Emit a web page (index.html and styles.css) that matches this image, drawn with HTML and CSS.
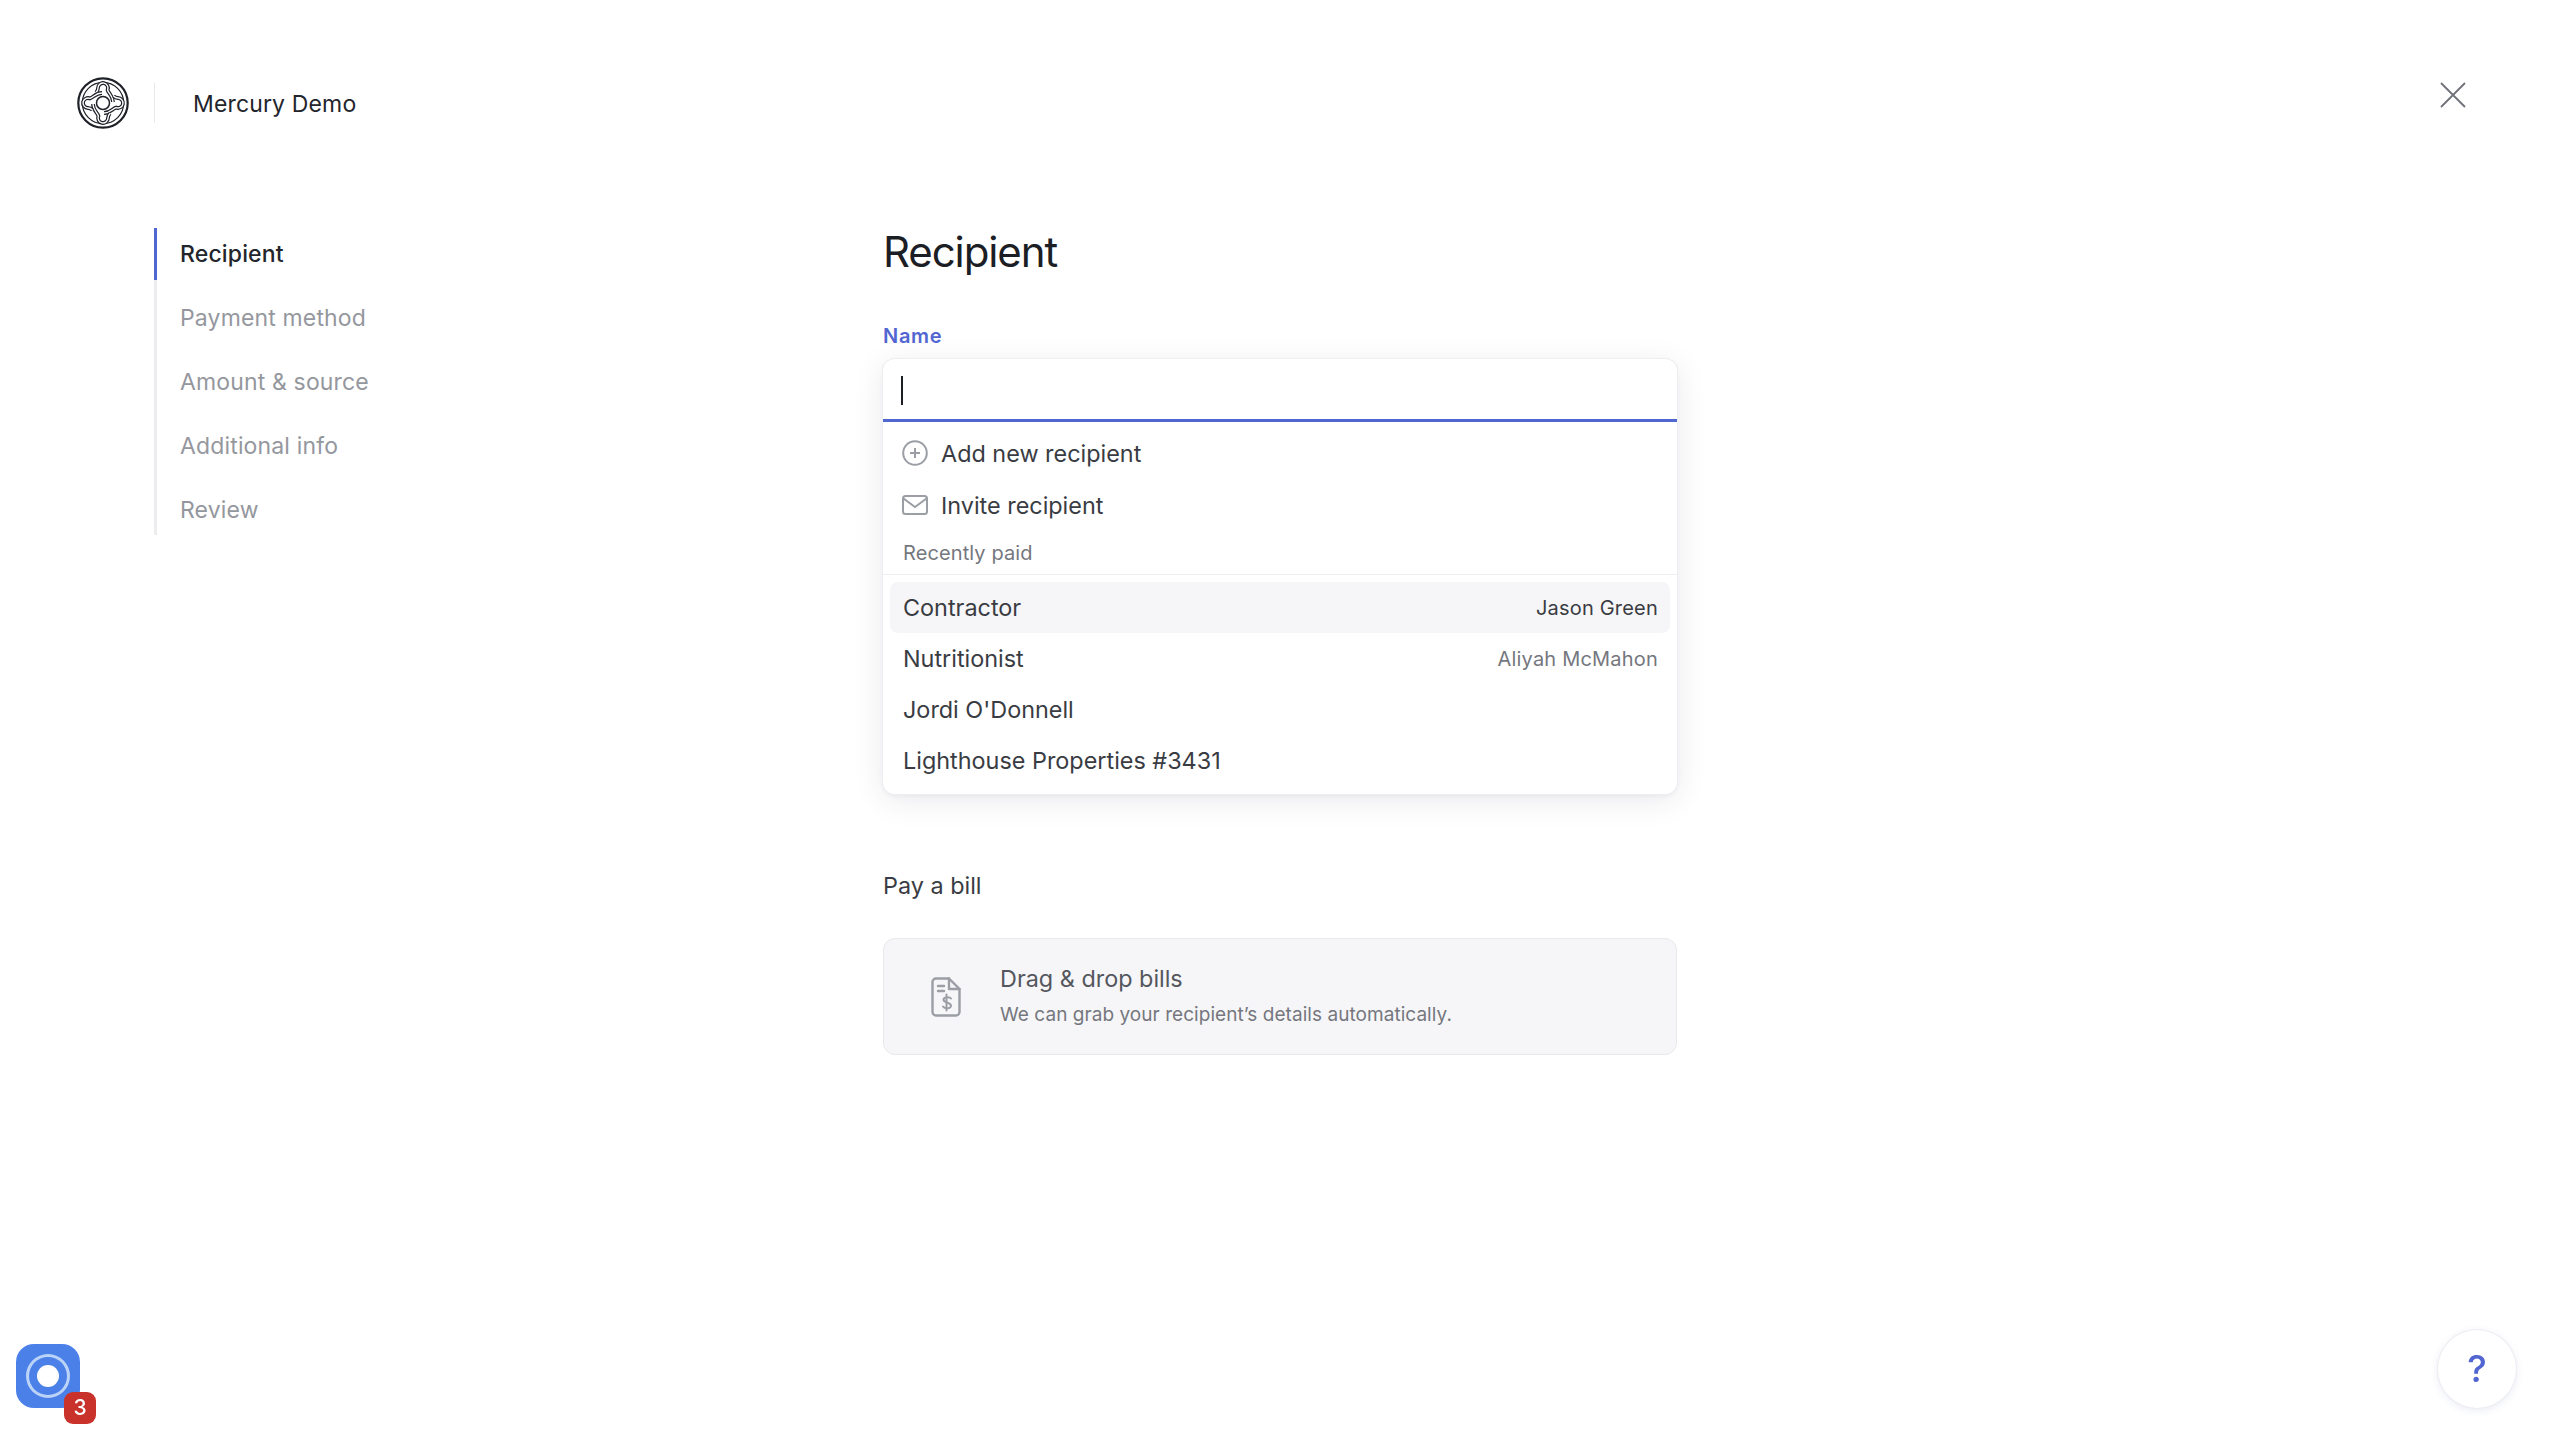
FILE: index.html
```html
<!DOCTYPE html>
<html lang="en">
<head>
    <meta charset="UTF-8">
    <title>Send money - Recipient</title>
    <link rel="stylesheet" href="styles.css">
</head>
<body>
    <header class="top-bar">
        <svg class="logo" viewBox="-26 -26 52 52" fill="none" stroke="#1f2128">
            <defs>
                <path id="band" d="M-7 -10.500C-5.500 -12 -5 -13.500 -5 -15A5 5 0 1 1 4.600 -13C5.500 -9.500 10 -7.500 10 -1"/>
                <g id="arm">
                    <use href="#band" stroke="#1f2128" stroke-width="3.800"/>
                    <use href="#band" stroke="#fff" stroke-width="1.400"/>
                </g>
            </defs>
            <circle r="24.700" stroke-width="2.200"/>
            <circle r="20.700" stroke-width="1.200"/>
            <use href="#arm"/>
            <use href="#arm" transform="rotate(90)"/>
            <use href="#arm" transform="rotate(180)"/>
            <use href="#arm" transform="rotate(270)"/>
            <circle r="6.500" stroke-width="1.500" fill="#fff"/>
        </svg>
        <span class="divider"></span>
        <span class="org-name">Mercury Demo</span>
        <svg class="close-icon" viewBox="0 0 26 26" fill="none" stroke="#6f7178" stroke-width="1.800">
            <path d="M1 1l24 24M25 1L1 25"/>
        </svg>
    </header>

    <div class="layout">
        <nav class="steps">
            <a class="step active">Recipient</a>
            <a class="step">Payment method</a>
            <a class="step">Amount &amp; source</a>
            <a class="step">Additional info</a>
            <a class="step">Review</a>
        </nav>

        <main class="form-col">
            <h1>Recipient</h1>
            <label class="field-label">Name</label>

            <div class="combo">
                <div class="combo-input"><span class="caret"></span></div>
                <div class="combo-menu">
                    <div class="action-row">
                        <svg class="action-icon" viewBox="0 0 26 26" fill="none" stroke="#9c9ea6" stroke-width="2">
                            <circle cx="13" cy="13" r="11.800"/>
                            <path d="M13 8v10M8 13h10"/>
                        </svg>
                        Add new recipient
                    </div>
                    <div class="action-row">
                        <svg class="action-icon" viewBox="0 0 26 20" fill="none" stroke="#9c9ea6" stroke-width="2">
                            <rect x="1" y="1" width="24" height="18" rx="2.500"/>
                            <path d="M1.500 3.500L13 12l11.500-8.500"/>
                        </svg>
                        Invite recipient
                    </div>
                    <div class="menu-heading">Recently paid</div>
                    <ul class="recent-list">
                        <li class="recent-row hover"><span>Contractor</span><span class="person">Jason Green</span></li>
                        <li class="recent-row"><span>Nutritionist</span><span class="person muted">Aliyah McMahon</span></li>
                        <li class="recent-row"><span>Jordi O'Donnell</span></li>
                        <li class="recent-row"><span>Lighthouse Properties #3431</span></li>
                    </ul>
                </div>
            </div>

            <div class="bill-title">Pay a bill</div>
            <div class="drop-card">
                <svg class="bill-icon" viewBox="0 0 30 40" fill="none" stroke="#9c9ea6" stroke-width="2.400" stroke-linejoin="round" stroke-linecap="round">
                    <path d="M18 1.500H5a3.500 3.500 0 0 0-3.500 3.500v30A3.500 3.500 0 0 0 5 38.500h20a3.500 3.500 0 0 0 3.500-3.500V12z"/>
                    <path d="M18 1.500V12h10.500M7 9h6M7 14h6"/>
                    <path d="M20 21.500c-1-1.500-6.500-2-7.500 .8-1.200 3.700 8 2.700 7.500 6.700-.4 3-6.500 2.800-8 .5M15.500 17.500v16" stroke-width="2"/>
                </svg>
                <div class="drop-text">
                    <div class="drop-title">Drag &amp; drop bills</div>
                    <div class="drop-sub">We can grab your recipient’s details automatically.</div>
                </div>
            </div>
        </main>
    </div>

    <div class="launcher">
        <span class="launcher-dot"></span>
        <span class="badge">3</span>
    </div>
    <div class="help-btn">?</div>
</body>
</html>
```

FILE: styles.css
```css
* {
    box-sizing: border-box;
}
html, body {
    height: 100%;
}
body {
    margin: 0;
    background: #fff;
    color: #2d2f36;
    font-family: Inter, "Noto Sans", sans-serif;
    overflow: hidden;
}
.top-bar {
    display: flex;
    align-items: center;
    height: 205px;
    padding: 0 0 0 77px;
    margin-bottom: -205px;
}
.logo {
    width: 52px;
    height: 52px;
}
.divider {
    width: 1px;
    height: 40px;
    margin-left: 25px;
    background: #e9e9ec;
}
.org-name {
    margin-left: 38px;
    padding-top: 2px;
    font-size: 23px;
    letter-spacing: 0.15px;
    color: #23252c;
}
.close-icon {
    width: 26px;
    height: 26px;
    margin-left: auto;
    margin-right: 94px;
    margin-top: -16px;
}
.layout {
    display: flex;
    padding-top: 228px;
}
.steps {
    width: 729px;
    height: 307px;
    margin-left: 154px;
    border-left: 3px solid #ededf0;
    display: flex;
    flex-direction: column;
}
.step {
    flex: none;
    height: 64px;
    margin-left: -3px;
    padding-left: 23px;
    font-size: 23px;
    line-height: 52px;
    letter-spacing: 0.15px;
    color: #95979e;
    border-left: 3px solid transparent;
}
.step.active {
    height: 52px;
    margin-bottom: 12px;
    color: #23252c;
    font-weight: 500;
    border-left-color: #5266d1;
}
.form-col {
    width: 794px;
}
h1 {
    margin: -2px 0 0;
    font-size: 42px;
    font-weight: 400;
    line-height: 52px;
    letter-spacing: -1.1px;
    color: #1c1e25;
}
.field-label {
    display: block;
    margin-top: 46px;
    font-size: 20px;
    font-weight: 600;
    line-height: 24px;
    letter-spacing: 0.7px;
    color: #5266d1;
}
.combo {
    margin-top: 11px;
    height: 435px;
    border-radius: 12px;
    background: #fff;
    box-shadow: 0 0 0 1px #eeeef1, 0 6px 30px rgba(40, 44, 80, 0.10), 0 2px 4px rgba(40, 44, 80, 0.06);
}
.combo-input {
    height: 63px;
    padding: 17px 0 0 18px;
    border-bottom: 3px solid #5266d1;
}
.caret {
    display: block;
    width: 2px;
    height: 29px;
    background: #1c1e25;
}
.combo-menu {
    padding-top: 5px;
}
.action-row {
    display: flex;
    align-items: center;
    height: 52px;
    padding-left: 19px;
    font-size: 23.400px;
    color: #3a3c43;
}
.action-icon {
    width: 26px;
    height: 26px;
    margin-right: 13px;
}
.menu-heading {
    height: 44px;
    padding: 8px 0 0 20px;
    font-size: 20px;
    line-height: 28px;
    letter-spacing: 0.1px;
    color: #75777e;
    border-bottom: 1px solid #eeeef1;
}
.recent-list {
    list-style: none;
    margin: 0;
    padding: 7px 7px 0;
}
.recent-row {
    display: flex;
    align-items: center;
    justify-content: space-between;
    height: 51px;
    padding: 0 12px 0 13px;
    border-radius: 8px;
    font-size: 23.400px;
    color: #3a3c43;
}
.recent-row.hover {
    background: #f6f6f8;
}
.person {
    font-size: 20px;
    letter-spacing: 0.2px;
    color: #3a3c43;
}
.person.muted {
    color: #75777e;
}
.bill-title {
    margin-top: 74px;
    font-size: 23.400px;
    line-height: 36px;
    color: #3a3c43;
}
.drop-card {
    display: flex;
    align-items: center;
    height: 117px;
    margin-top: 34px;
    padding-left: 47px;
    border: 1px solid #e9e9ec;
    border-radius: 12px;
    background: #f6f6f8;
}
.bill-icon {
    width: 30px;
    height: 40px;
    margin-right: 39px;
}
.drop-text {
    padding-bottom: 3px;
}
.drop-title {
    font-size: 23.400px;
    line-height: 32px;
    color: #55575e;
}
.drop-sub {
    margin-top: 8px;
    font-size: 19px;
    line-height: 24px;
    letter-spacing: 0.05px;
    color: #75777e;
}
.launcher {
    position: fixed;
    left: 16px;
    top: 1344px;
    width: 64px;
    height: 64px;
    border-radius: 18px;
    background: #4a80e8;
    display: flex;
    align-items: center;
    justify-content: center;
}
.launcher-dot {
    width: 22px;
    height: 22px;
    border-radius: 50%;
    background: #fff;
    box-shadow: 0 0 0 8px #4a80e8, 0 0 0 11px #bcd3f8;
}
.badge {
    position: absolute;
    left: 48px;
    top: 48px;
    width: 32px;
    height: 32px;
    border-radius: 9px;
    background: #c8322b;
    color: #fff;
    font-size: 21px;
    font-weight: 500;
    line-height: 32px;
    text-align: center;
}
.help-btn {
    position: fixed;
    left: 2438px;
    top: 1330px;
    width: 78px;
    height: 78px;
    border-radius: 50%;
    background: #fff;
    box-shadow: 0 0 0 1px #ececf2, 0 2px 8px rgba(60, 70, 160, 0.12);
    color: #5266d1;
    font-size: 37px;
    font-weight: 500;
    line-height: 78px;
    text-align: center;
}
```
